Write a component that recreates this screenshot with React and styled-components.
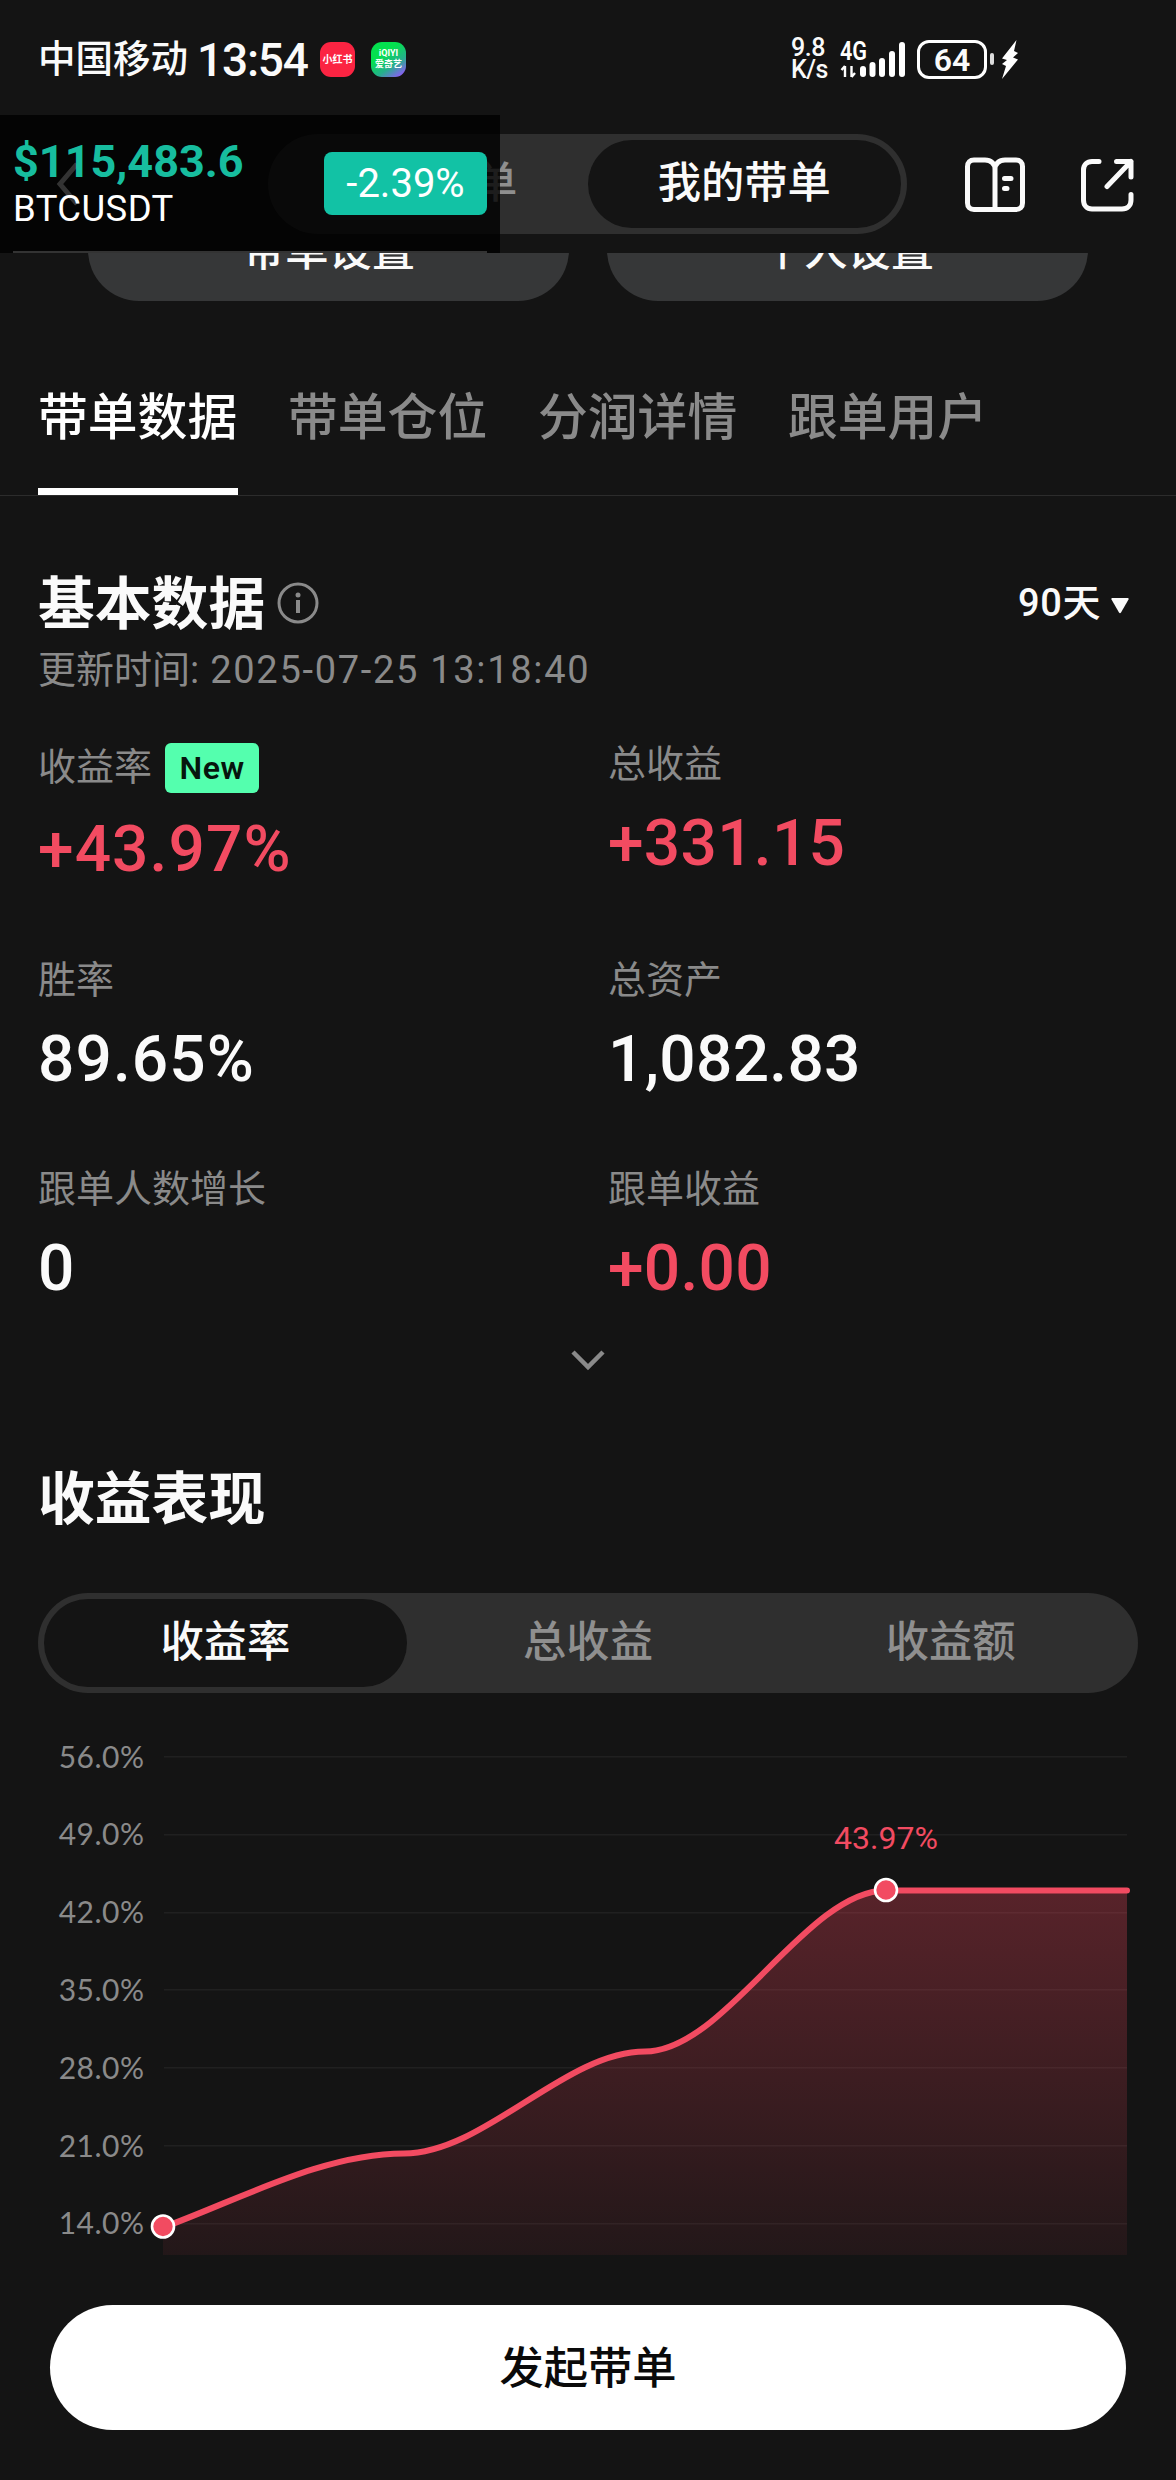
import React from "react";
import styled, { createGlobalStyle } from "styled-components";

const colors = {
    bg: "#141414",
    panel: "#2f2f2f",
    card: "#363738",
    text: "#fafafa",
    muted: "#8a8a8a",
    red: "#f24b61",
    green: "#12c2a5",
}

const GlobalStyle = createGlobalStyle`
    * {
        box-sizing: border-box;
    }
    body {
        margin: 0;
        background: ${colors.bg};
        font-family: Roboto, "Noto Sans CJK SC", sans-serif;
        color: ${colors.text};
    }
`

const StylePage = styled.div`
    width: 1176px;
    height: 2480px;
    display: flex;
    flex-direction: column;
    overflow: hidden;
    background: ${colors.bg};
`

/* status bar */
const StyleStatus = styled.header`
    height: 115px;
    padding: 38px 157px 35px 38px;
    display: flex;
    align-items: center;
    flex: none;
`
const StyleCarrier = styled.span`
    font-size: 37.5px;
    line-height: 44px;
    font-weight: 500;
    width: 159px;
`
const StyleClock = styled.span`
    font-size: 46px;
    line-height: 46px;
    font-weight: 500;
    letter-spacing: -1.2px;
    padding-top: 2px;
    width: 123px;
`
const StyleAppIcon = styled.span`
    width: 35px;
    height: 35px;
    margin-right: 16px;
    border-radius: 11px;
    display: flex;
    flex-direction: column;
    align-items: center;
    justify-content: center;
    white-space: nowrap;
    color: #fff;
    background: ${props => props.$bg};
    font-size: ${props => props.$size}px;
    line-height: 11px;
    font-weight: 700;
`
const StyleStatusRight = styled.div`
    margin-left: auto;
    display: flex;
    align-items: center;
`
const StyleSpeed = styled.div`
    width: 49px;
    font-size: 25px;
    line-height: 22px;
    font-weight: 500;
    letter-spacing: -0.5px;
`
const StyleSignal = styled.div`
    width: 77px;
    height: 40px;
`
const StyleBattery = styled.div`
    width: 70px;
    height: 39px;
    border: 3px solid #fff;
    border-radius: 12px;
    font-size: 32px;
    line-height: 35px;
    font-weight: 600;
    text-align: center;
`
const StyleNub = styled.div`
    width: 4px;
    height: 12px;
    margin: 0 7px 0 3px;
    border-radius: 2px;
    background: #ddd;
`

/* top navigation with the floating ticker over it */
const StyleNav = styled.nav`
    position: relative;
    height: 138px;
    padding: 0 42px 0 56px;
    display: flex;
    align-items: center;
    flex: none;
`
const StyleNavSegment = styled.div`
    width: 639px;
    height: 100px;
    margin: 0 58px 0 188px;
    padding: 6px;
    border-radius: 50px;
    display: flex;
    background: ${colors.panel};
`
const StyleSegmentItem = styled.div`
    flex: 1;
    border-radius: 44px;
    text-align: center;
    font-size: 43.3px;
    line-height: 88px;
    font-weight: 500;
    color: ${props => props.$active ? colors.text : "#8f8f8f"};
    background: ${props => props.$active ? colors.bg : "transparent"};
`
const StyleNavIcons = styled.div`
    display: flex;
    gap: 56px;
    padding-top: 2px;
`
const StyleTicker = styled.aside`
    position: absolute;
    left: 0;
    top: 0;
    width: 500px;
    height: 138px;
    padding: 0 13px;
    background: rgba(0, 0, 0, 0.8);
`
const StyleTickerBody = styled.div`
    height: 138px;
    display: flex;
    align-items: center;
    justify-content: space-between;
    border-bottom: 2px solid #333;
`
const StylePrice = styled.div`
    height: 51px;
    font-size: 45px;
    line-height: 54px;
    font-weight: 700;
    color: #17bd9f;
`
const StylePair = styled.div`
    font-size: 36.5px;
    line-height: 46px;
    letter-spacing: 0.4px;
    color: #fff;
`
const StyleChange = styled.div`
    width: 163px;
    height: 63px;
    border-radius: 8px;
    text-align: center;
    font-size: 40px;
    line-height: 64px;
    color: #fff;
    background: ${colors.green};
`

/* the two setting buttons, scrolled half out of view */
const StyleSettings = styled.div`
    height: 48px;
    padding: 0 88px;
    display: flex;
    align-items: flex-end;
    justify-content: space-between;
    overflow: hidden;
    flex: none;
`
const StyleSettingButton = styled.div`
    width: 481px;
    height: 102px;
    border-radius: 51px;
    text-align: center;
    font-size: 43.3px;
    line-height: 105px;
    font-weight: 500;
    background: ${colors.card};
`

const StyleTabs = styled.div`
    height: 195px;
    padding: 78px 38px 0;
    display: flex;
    gap: 50px;
    border-bottom: 1px solid #2c2c2c;
    flex: none;
`
const StyleTab = styled.div`
    width: 200px;
    font-size: 49.8px;
    line-height: 78px;
    height: 116px;
    font-weight: 500;
    white-space: nowrap;
    color: ${props => props.$active ? "#fff" : colors.muted};
    border-bottom: ${props => props.$active ? "7px solid #fff" : "none"};
`

const StyleMain = styled.main`
    padding: 69px 38px 0 38px;
    flex: none;
`
const StyleHeading = styled.div`
    height: 76px;
    display: flex;
    align-items: center;
`
const StyleTitle = styled.h2`
    height: 76px;
    margin: 0;
    font-size: 56.8px;
    line-height: 79px;
    font-weight: 700;
`
const StyleInfo = styled.svg`
    margin: 0 0 1px 12px;
`
const StylePeriod = styled.div`
    margin-left: auto;
    padding-right: 9px;
    display: flex;
    align-items: center;
    font-size: 38px;
    line-height: 76px;
    font-weight: 500;
    letter-spacing: 0.6px;
    gap: 10px;
`
const StyleTriangle = styled.svg`
    margin-top: 5px;
`
const StyleUpdated = styled.div`
    height: 54px;
    display: flex;
    gap: 11px;
    font-size: 38px;
    line-height: 58px;
    color: ${colors.muted};
`
const StyleDate = styled.span`
    letter-spacing: 1.7px;
`
const StyleStats = styled.div`
    height: 586px;
    margin-top: 45px;
    display: grid;
    grid-template-columns: 570px 1fr;
    grid-template-rows: 216px 209px 161px;
`
const StyleStat = styled.div`
    padding-top: ${props => props.$tagged ? 3 : 0}px;
`
const StyleLabel = styled.div`
    height: 48px;
    display: flex;
    align-items: center;
    gap: 13px;
    font-size: 38px;
    line-height: 48px;
    color: ${colors.muted};
`
const StyleTag = styled.span`
    width: 94px;
    height: 50px;
    margin-top: 2px;
    border-radius: 6px;
    text-align: center;
    font-size: 32px;
    line-height: 50px;
    font-weight: 600;
    letter-spacing: 0.5px;
    color: #06150d;
    background: #54ffae;
`
const StyleValue = styled.div`
    margin-top: ${props => props.$tagged ? 23 : 20}px;
    font-size: 64px;
    line-height: 72px;
    font-weight: 500;
    letter-spacing: ${props => props.$percent ? 1.1 : 0.3}px;
    color: ${props => props.$gain ? colors.red : colors.text};
`
const StyleMore = styled.div`
    height: 134px;
    padding-top: 23px;
    display: flex;
    justify-content: center;
`

const StyleSegment = styled.div`
    height: 100px;
    margin-top: 57px;
    padding: 6px;
    border-radius: 50px;
    display: flex;
    background: ${colors.panel};
`
const StyleChart = styled.svg`
    display: block;
    width: 1176px;
    height: 572px;
    margin-left: -38px;
`
const StyleFooter = styled.footer`
    padding: 40px 50px 0;
`
const StyleLaunch = styled.button`
    display: block;
    width: 100%;
    height: 125px;
    padding: 3px 0 0;
    border: 0;
    border-radius: 63px;
    font-family: inherit;
    font-size: 44.3px;
    line-height: 122px;
    font-weight: 500;
    color: #0a0a0a;
    background: #fff;
`

const tabs = ["带单数据", "带单仓位", "分润详情", "跟单用户"]

const stats = [
    { label: "收益率", value: "+43.97%", gain: true, tag: "New" },
    { label: "总收益", value: "+331.15", gain: true },
    { label: "胜率", value: "89.65%" },
    { label: "总资产", value: "1,082.83" },
    { label: "跟单人数增长", value: "0" },
    { label: "跟单收益", value: "+0.00", gain: true },
]

const modes = ["收益率", "总收益", "收益额"]

const ticks = [56, 49, 42, 35, 28, 21, 14]

function Signal() {
    return (
        <svg width="68" height="40" viewBox="0 0 68 40" fill="#fff">
            <text x="0" y="21" fontSize="25" fontWeight="600" textLength="27" lengthAdjust="spacingAndGlyphs">4G</text>
            <path d="M5 38V27M5 27L1.5 31M11.500 27V38M11.500 38L15 34" stroke="#fff" strokeWidth="2.400" fill="none" />
            <rect x="20" y="27" width="6" height="11" rx="3" />
            <rect x="29.500" y="23" width="6" height="15" rx="3" />
            <rect x="39" y="19" width="6" height="19" rx="3" />
            <rect x="49" y="12" width="6" height="26" rx="3" />
            <rect x="59" y="3" width="6" height="35" rx="3" />
        </svg>
    )
}

function Chart() {
    const line = "M163 534.500C243 505 324 460.500 404 460.500C484 460.500 565 358.500 645 358.500C725 358.500 806 197.500 886 197.500H1127"
    return (
        <StyleChart viewBox="0 0 1176 572">
            <defs>
                <linearGradient id="area" x1="0" y1="0" x2="0" y2="1">
                    <stop offset="0" stopColor="#f6465d" stopOpacity="0.3" />
                    <stop offset="1" stopColor="#f6465d" stopOpacity="0.065" />
                </linearGradient>
            </defs>
            {ticks.map((tick, index) => (
                <g key={tick}>
                    <text
                        x="144.500" y={74.5 + index * 77.83} textAnchor="end" letterSpacing="0.5"
                        fontFamily="Lato, sans-serif" fontSize="30" fill={colors.muted}
                    >{tick.toFixed(1)}%</text>
                    <rect x="164" y={Math.round(63 + index * 77.83)} width="963" height="1.500" fill="#202020" />
                </g>
            ))}
            <path d={line + "V562H163Z"} fill="url(#area)" />
            <path d={line} fill="none" stroke={colors.red} strokeWidth="6" strokeLinecap="round" />
            <circle cx="163" cy="533.500" r="11" fill={colors.red} stroke="#fff" strokeWidth="2.600" />
            <circle cx="886" cy="197" r="11" fill={colors.red} stroke="#fff" strokeWidth="2.600" />
            <text x="886" y="156" textAnchor="middle" fontSize="32" fill={colors.red}>43.97%</text>
        </StyleChart>
    )
}

function App() {
    return (
        <StylePage>
            <GlobalStyle />
            <StyleStatus>
                <StyleCarrier>中国移动</StyleCarrier>
                <StyleClock>13:54</StyleClock>
                <StyleAppIcon $bg="#fb2442" $size={10}>小红书</StyleAppIcon>
                <StyleAppIcon $bg="linear-gradient(145deg, #04e04f 35%, #25b08c 65%, #8b5cf6 92%)" $size={9}>
                    <span>iQIYI</span>
                    <span>爱奇艺</span>
                </StyleAppIcon>
                <StyleStatusRight>
                    <StyleSpeed>
                        <div>9.8</div>
                        <div>K/s</div>
                    </StyleSpeed>
                    <StyleSignal><Signal /></StyleSignal>
                    <StyleBattery>64</StyleBattery>
                    <StyleNub />
                    <svg width="18" height="39" viewBox="0 0 18 39" fill="#fff">
                        <path d="M15.500 0L1 18.500L6 20L1 24L5 26L1 39L17 19.500L12 17.500L17 13L13 11Z" />
                    </svg>
                </StyleStatusRight>
            </StyleStatus>

            <StyleNav>
                <svg width="24" height="44" viewBox="0 0 24 44" fill="none" stroke="#fff" strokeWidth="5">
                    <path d="M21 2L4 22L21 42" />
                </svg>
                <StyleNavSegment>
                    <StyleSegmentItem>我的跟单</StyleSegmentItem>
                    <StyleSegmentItem $active>我的带单</StyleSegmentItem>
                </StyleNavSegment>
                <StyleNavIcons>
                    <svg width="60" height="56" viewBox="0 0 60 56" fill="none" stroke="#fafafa" strokeWidth="5" strokeLinecap="round">
                        <path d="M30 52.500H9C5 52.500 2.500 50 2.500 46V9.500C2.500 5.500 5 3 9 3H20C26 3 30 7 30 12C30 7 34 3 40 3H51C55 3 57.500 5.500 57.500 9.500V46C57.500 50 55 52.500 51 52.500H30V12" />
                        <path d="M39.500 21.500H46M39.500 31.500H42" />
                    </svg>
                    <svg width="53" height="56" viewBox="0 0 53 56" fill="none" stroke="#fafafa" strokeWidth="5" strokeLinecap="round" strokeLinejoin="round">
                        <path d="M18 4.500H11C6 4.500 2.500 8 2.500 13V43C2.500 48.500 6 52 11 52H41C46.500 52 50 48.500 50 43V37.500" />
                        <path d="M35.500 4.500H50V20M50 4.500L26 29.500" />
                    </svg>
                </StyleNavIcons>
                <StyleTicker>
                    <StyleTickerBody>
                        <div>
                            <StylePrice>$115,483.6</StylePrice>
                            <StylePair>BTCUSDT</StylePair>
                        </div>
                        <StyleChange>-2.39%</StyleChange>
                    </StyleTickerBody>
                </StyleTicker>
            </StyleNav>

            <StyleSettings>
                <StyleSettingButton>带单设置</StyleSettingButton>
                <StyleSettingButton>个人设置</StyleSettingButton>
            </StyleSettings>

            <StyleTabs>
                {tabs.map((tab, index) => <StyleTab key={tab} $active={index === 0}>{tab}</StyleTab>)}
            </StyleTabs>

            <StyleMain>
                <StyleHeading>
                    <StyleTitle>基本数据</StyleTitle>
                    <StyleInfo width="42" height="42" viewBox="0 0 42 42" fill="none" stroke={colors.muted} strokeWidth="3">
                        <circle cx="21" cy="21" r="19" />
                        <path d="M21 18V31" strokeWidth="4" />
                        <circle cx="21" cy="13" r="2.500" fill={colors.muted} stroke="none" />
                    </StyleInfo>
                    <StylePeriod>
                        90天
                        <StyleTriangle width="18" height="16" viewBox="0 0 18 16" fill={colors.text}>
                            <path d="M1 0H17Q18 0 17.500 1.500L10 14.500Q9 16 8 14.500L0.500 1.500Q0 0 1 0Z" />
                        </StyleTriangle>
                    </StylePeriod>
                </StyleHeading>
                <StyleUpdated>
                    <span>更新时间:</span>
                    <StyleDate>2025-07-25 13:18:40</StyleDate>
                </StyleUpdated>

                <StyleStats>
                    {stats.map((stat) => (
                        <StyleStat key={stat.label} $tagged={!!stat.tag}>
                            <StyleLabel>
                                {stat.label}
                                {stat.tag && <StyleTag>{stat.tag}</StyleTag>}
                            </StyleLabel>
                            <StyleValue
                                $gain={stat.gain}
                                $tagged={!!stat.tag}
                                $percent={stat.value.endsWith("%")}
                            >{stat.value}</StyleValue>
                        </StyleStat>
                    ))}
                </StyleStats>

                <StyleMore>
                    <svg width="34" height="22" viewBox="0 0 34 22" fill="none" stroke={colors.muted} strokeWidth="4.500">
                        <path d="M2 3L17 18L32 3" />
                    </svg>
                </StyleMore>

                <StyleTitle>收益表现</StyleTitle>
                <StyleSegment>
                    {modes.map((mode, index) => <StyleSegmentItem key={mode} $active={index === 0}>{mode}</StyleSegmentItem>)}
                </StyleSegment>
                <Chart />
            </StyleMain>

            <StyleFooter>
                <StyleLaunch>发起带单</StyleLaunch>
            </StyleFooter>
        </StylePage>
    )
}

export default App
